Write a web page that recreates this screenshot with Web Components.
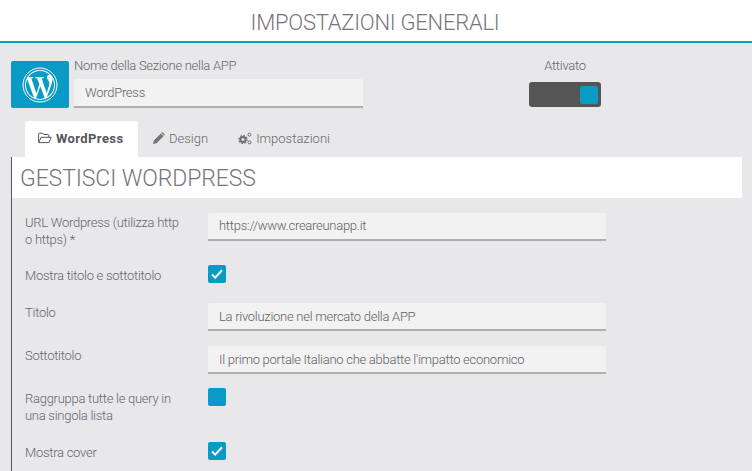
<!DOCTYPE html>
<html lang="it">
<head>
<meta charset="utf-8">
<title>Impostazioni generali</title>
<style>
  html, body { margin: 0; padding: 0; height: 471px; overflow: hidden; background: #e8e8ea; }
  body { font-family: Roboto, "Liberation Sans", Arial, sans-serif; font-weight: 300; font-size: 13px; letter-spacing: -.27px; color: #66666a; }
</style>
</head>
<body>
<app-settings></app-settings>

<script>
const check = '<svg width="12" height="10" viewBox="0 0 12 10"><path d="M1 5.500 4.200 8.600 11 1.200" fill="none" stroke="#fff" stroke-width="2"/></svg>';

class PageHeader extends HTMLElement {
  connectedCallback() {
    this.attachShadow({ mode: 'open' });
    this.shadowRoot.innerHTML = `
      <style>
        :host { display: block; background: #fff; border-bottom: 2px solid #0d9ac4; height: 41px; }
        h1 {
          margin: 0; padding-right: 2px; text-align: center;
          font: 300 22px/45px Roboto, sans-serif; letter-spacing: -.25px; color: #77767c;
        }
      </style>
      <h1><slot></slot></h1>
    `;
  }
}

class TextField extends HTMLElement {
  connectedCallback() {
    this.attachShadow({ mode: 'open' });
    this.shadowRoot.innerHTML = `
      <style>
        :host {
          display: block; box-sizing: border-box; background: #f2f2f2;
          border-bottom: 2px solid #aeaeae; border-radius: 2px 2px 0 0;
          height: var(--h, 28px); padding: 0 11px; color: #616165;
          line-height: var(--lh, 26px);
        }
      </style>
      <slot></slot>
    `;
  }
}

class CheckBox extends HTMLElement {
  connectedCallback() {
    this.attachShadow({ mode: 'open' });
    this.shadowRoot.innerHTML = `
      <style>
        :host {
          display: flex; align-items: center; justify-content: center;
          width: 18px; height: 18px; background: #0a9ac6; border-radius: 2px;
        }
      </style>
      ${this.hasAttribute('checked') ? check : ''}
    `;
  }
}

class ToggleSwitch extends HTMLElement {
  connectedCallback() {
    this.attachShadow({ mode: 'open' });
    this.shadowRoot.innerHTML = `
      <style>
        :host {
          display: flex; justify-content: flex-end; align-items: center; box-sizing: border-box;
          width: 72px; height: 25px; padding-right: 3px; background: #555; border-radius: 3px;
        }
        i { display: block; width: 18px; height: 18px; background: #0a9ac6; border-radius: 2px; }
      </style>
      <i></i>
    `;
  }
}

class SectionTabs extends HTMLElement {
  connectedCallback() {
    this.attachShadow({ mode: 'open' });
    this.shadowRoot.innerHTML = `
      <style>
        :host { display: flex; height: 36px; margin-left: 25px; font-size: 13px; letter-spacing: 0; }
        div { display: flex; align-items: center; gap: 4px; padding: 0 13px 2px; color: #66666a; }
        .on { background: #fff; border-radius: 3px 3px 0 0; font-weight: 700; letter-spacing: .4px; color: #55555a; width: 113px; box-sizing: border-box; }
        svg { display: block; }
      </style>
      <div class="on">
        <svg width="14" height="12" viewBox="0 0 14 12"><path d="M.6 10V2.200q0-1 1-1h3l1 1.300h4.200q1 0 1 1V5M.8 10.600 3 5.300h10.200L11 10.600Z" fill="none" stroke="#55555a"/></svg>
        WordPress
      </div>
      <div style="padding-left:15px;padding-right:15px">
        <svg width="12" height="12" viewBox="0 0 12 12"><path d="M0 12 .8 8.400 7.800 1.400 10.600 4.200 3.600 11.200ZM8.600.6Q9.300 0 10 .6L11.400 2Q12 2.700 11.400 3.400L11.100 3.700 8.300 .9Z" fill="#77777b"/></svg>
        Design
      </div>
      <div style="padding-left:15px">
        <svg width="14" height="13" viewBox="0 0 14 13"><g fill="none" stroke="#6f6f73"><circle cx="5" cy="7.500" r="2.600" stroke-width="2"/><circle cx="5" cy="7.500" r="4" stroke-width="1.400" stroke-dasharray="1.600 1.500"/><circle cx="11.500" cy="2.600" r="1.500"/><circle cx="11.500" cy="10.400" r="1.500"/></g></svg>
        Impostazioni
      </div>
    `;
  }
}

class FormRow extends HTMLElement {
  connectedCallback() {
    this.attachShadow({ mode: 'open' });
    this.shadowRoot.innerHTML = `
      <style>
        :host { display: grid; grid-template-columns: 183px 398px; padding-left: 13px; align-items: start; line-height: 17px; }
        label { display: block; padding-top: var(--label-top, 0); width: 160px; }
      </style>
      <label><slot name="label"></slot></label>
      <div><slot></slot></div>
    `;
  }
}

class AppSettings extends HTMLElement {
  connectedCallback() {
    this.attachShadow({ mode: 'open' });
    this.shadowRoot.innerHTML = `
      <style>
        :host { display: block; }
        .top { display: flex; padding: 18px 0 0 11px; box-sizing: border-box; height: 78px; }
        .logo {
          width: 58px; height: 47px; background: #0a9ac6; border-radius: 2px;
          display: flex; align-items: center; justify-content: center; margin-right: 5px;
        }
        .name { width: 289px; }
        .name span { display: block; line-height: 16px; height: 18px; margin-top: -3px; padding-bottom: 3px; }
        .state { margin-left: 166px; width: 72px; }
        .state span { display: block; text-align: center; line-height: 14px; height: 23px; margin-top: -2px; }
        .panel { margin-left: 11px; border-left: 1px solid #55555a; height: 314px; }
        h2 {
          margin: 0 10px 0 0; padding-left: 8px; background: #fff; height: 41px;
          font: 300 23px/43px Roboto, sans-serif; letter-spacing: -.1px; color: #77767c;
        }
        .rows { padding-top: 15px; }
      </style>
      <page-header>IMPOSTAZIONI GENERALI</page-header>
      <div class="top">
        <div class="logo">
          <svg width="36" height="36" viewBox="0 0 36 36">
            <circle cx="18" cy="18" r="17" fill="none" stroke="#fff" stroke-width="1"/>
            <circle cx="18" cy="18" r="15" fill="#fff"/>
            <path d="M4 18c0 5.600 3.300 10.400 8 12.700L5.300 12.300C4.500 14 4 16 4 18ZM27.500 17.300c0-1.700-.6-2.900-1.100-3.800-.7-1.100-1.400-2.100-1.400-3.200 0-1.300 1-2.500 2.300-2.500h.2C25 5.300 21.700 4 18 4 13.100 4 8.800 6.500 6.300 10.300h.9c1.500 0 3.700-.2 3.700-.2.8 0 .9 1.100.1 1.200 0 0-.8.1-1.600.1l5 15 3-9.100-2.200-5.900c-.7 0-1.400-.1-1.400-.1-.7-.1-.7-1.200.1-1.200 0 0 2.300.2 3.600.2 1.500 0 3.700-.2 3.700-.2.8 0 .9 1.100.1 1.200 0 0-.8.1-1.600.1l5 14.800 1.400-4.600c.6-1.900 1.100-3.300 1.100-4.400ZM18.300 19.200l-4.200 12.100c1.300.4 2.600.6 4 .6 1.600 0 3.200-.3 4.700-.8-.1-.1-.1-.1-.1-.2ZM30.300 11.300c.1.400.1.900.1 1.400 0 1.400-.3 3-1.100 5l-4.300 12.300C29.200 27.600 32 23.100 32 18c0-2.400-.6-4.700-1.700-6.700Z" fill="#0a9ac6"/>
          </svg>
        </div>
        <div class="name">
          <span>Nome della Sezione nella APP</span>
          <text-field style="--h:29px;--lh:27px">WordPress</text-field>
        </div>
        <div class="state">
          <span>Attivato</span>
          <toggle-switch></toggle-switch>
        </div>
      </div>
      <section-tabs></section-tabs>
      <div class="panel">
        <h2>GESTISCI WORDPRESS</h2>
        <div class="rows">
          <form-row style="height:45px;--label-top:1px"><span slot="label">URL Wordpress (utilizza http o https) *</span><text-field>https://www.creareunapp.it</text-field></form-row>
          <form-row style="height:45px;--label-top:9px"><span slot="label">Mostra titolo e sottotitolo</span><check-box checked style="margin-top:7px"></check-box></form-row>
          <form-row style="height:43px;--label-top:1px"><span slot="label">Titolo</span><text-field style="--lh:28px">La rivoluzione nel mercato della APP</text-field></form-row>
          <form-row style="height:43px;--label-top:1px"><span slot="label">Sottotitolo</span><text-field style="--lh:28px">Il primo portale Italiano che abbatte l'impatto economico</text-field></form-row>
          <form-row style="height:54px;--label-top:1px"><span slot="label">Raggruppa tutte le query in una singola lista</span><check-box style="margin-top:-1px"></check-box></form-row>
          <form-row style="--label-top:1px"><span slot="label">Mostra cover</span><check-box checked style="margin-top:-1px"></check-box></form-row>
        </div>
      </div>
    `;
  }
}

customElements.define('page-header', PageHeader);
customElements.define('text-field', TextField);
customElements.define('check-box', CheckBox);
customElements.define('toggle-switch', ToggleSwitch);
customElements.define('section-tabs', SectionTabs);
customElements.define('form-row', FormRow);
customElements.define('app-settings', AppSettings);
</script>
</body>
</html>
